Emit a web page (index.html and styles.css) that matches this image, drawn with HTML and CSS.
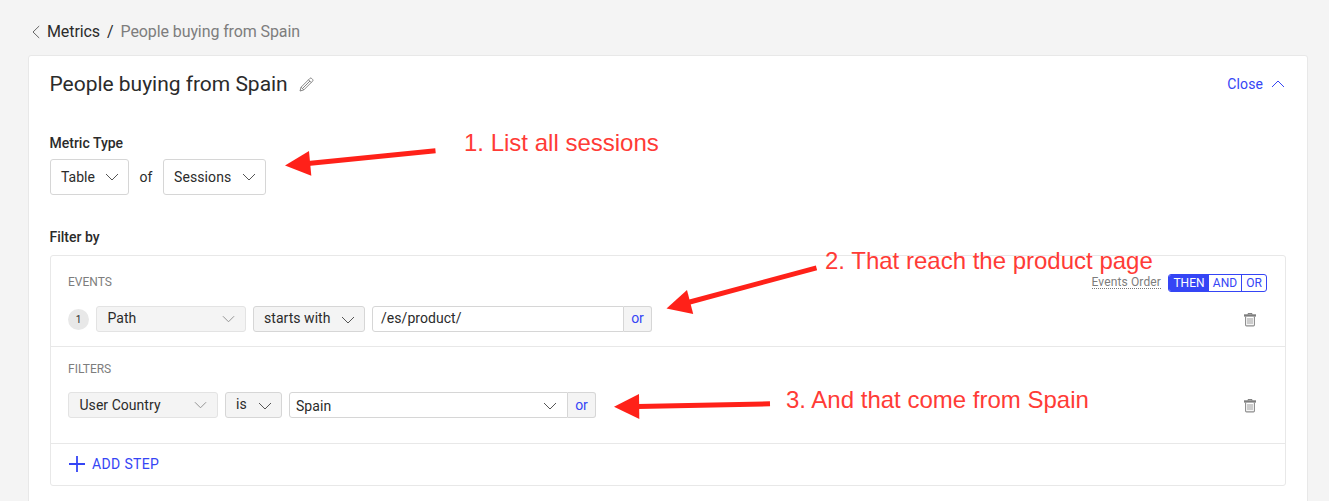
FILE: index.html
```html
<!DOCTYPE html>
<html lang="en">
<head>
<meta charset="utf-8">
<title>Metrics</title>
<link rel="stylesheet" href="styles.css">
</head>
<body>
<svg class="defs" width="0" height="0">
  <symbol id="chev" viewBox="0 0 14 8"><path d="M1 1 L7 7 L13 1" fill="none" stroke="currentColor" stroke-width="1"/></symbol>
  <symbol id="trash" viewBox="0 0 12 14"><path d="M4 1.6 V.6 H8 V1.6" fill="none" stroke="#777"/><path d="M0 1.3 H12 V3.6 H0Z" fill="#7d7d7d"/><path d="M1.6 3.6 V12 Q1.6 12.9 2.5 12.9 H9.5 Q10.4 12.9 10.4 12 V3.6" fill="none" stroke="#8c8c8c" stroke-width="1.1"/><path d="M4 5 V11.2 M6 5 V11.2 M8 5 V11.2" stroke="#999" stroke-width="1"/></symbol>
</svg>
<div class="page">
  <nav class="crumbs">
    <svg class="back" viewBox="0 0 8 14"><path d="M7.2 1 L1 7 L7.2 13" fill="none" stroke="#666"/></svg>
    <span class="crumb-link">Metrics</span><span class="crumb-sep">/</span><span class="crumb-current">People buying from Spain</span>
  </nav>
  <main class="card">
    <header class="head">
      <h1 class="title">People buying from Spain</h1>
      <svg class="pencil" viewBox="0 0 15 15"><path d="M1 14 L2.1 10.2 L10.9 1.4 Q11.7 .6 12.6 1.4 L13.6 2.4 Q14.4 3.3 13.6 4.1 L4.8 12.9 Z M2.1 10.2 L4.8 12.9 M9.5 2.8 L12.2 5.5 M3.6 11.4 L11 4" fill="none" stroke="#777" stroke-width=".9"/></svg>
      <div class="close"><span>Close</span><svg class="chev up"><use href="#chev"/></svg></div>
    </header>
    <div class="label">Metric Type</div>
    <div class="type-row">
      <div class="big-select table"><span>Table</span><svg class="chev"><use href="#chev"/></svg></div>
      <span class="of">of</span>
      <div class="big-select sessions"><span>Sessions</span><svg class="chev"><use href="#chev"/></svg></div>
    </div>
    <div class="label filter-label">Filter by</div>
    <section class="panel">
      <div class="events">
        <div class="section-head">
          <span class="section-name">EVENTS</span>
          <div class="order">
            <span class="order-label">Events Order</span>
            <div class="toggle"><span class="opt then">THEN</span><span class="opt and">AND</span><span class="opt or">OR</span></div>
          </div>
        </div>
        <div class="row">
          <span class="badge">1</span>
          <div class="select field"><span>Path</span><svg class="chev small"><use href="#chev"/></svg></div>
          <div class="select starts"><span>starts with</span><svg class="chev low"><use href="#chev"/></svg></div>
          <div class="value path-value"><span>/es/product/</span></div>
          <div class="or-btn">or</div>
          <svg class="trash"><use href="#trash"/></svg>
        </div>
      </div>
      <div class="filters">
        <span class="section-name">FILTERS</span>
        <div class="row">
          <div class="select field"><span>User Country</span><svg class="chev small"><use href="#chev"/></svg></div>
          <div class="select is"><span>is</span><svg class="chev low"><use href="#chev"/></svg></div>
          <div class="value country"><span>Spain</span><svg class="chev"><use href="#chev"/></svg></div>
          <div class="or-btn">or</div>
          <svg class="trash"><use href="#trash"/></svg>
        </div>
      </div>
      <div class="add"><svg class="plus" viewBox="0 0 16 16"><path d="M8 0 V16 M0 8 H16" stroke="#3545f5" stroke-width="1.8"/></svg><span>ADD STEP</span></div>
    </section>
  </main>
  <svg class="arrows" viewBox="0 0 1329 501">
    <g stroke="#ff2119" stroke-width="5"><path d="M435.5 150.8 L308 163.4"/><path d="M816.5 267.8 L688 302.5"/><path d="M770 403.8 L638 406.4"/></g>
    <g fill="#ff2119"><path d="M285 165.5 L309 151 L311.3 175.8Z"/><path d="M666.5 308.5 L687 290 L693.2 314Z"/><path d="M614 406.8 L639 394 L639.3 419Z"/></g>
  </svg>
  <span class="note note1">1. List all sessions</span>
  <span class="note note2">2. That reach the product page</span>
  <span class="note note3">3. And that come from Spain</span>
</div>
</body>
</html>
```

FILE: styles.css
```css
* { box-sizing: border-box; }
body { margin: 0; background: #f4f4f4; font-family: Roboto, "Liberation Sans", sans-serif; font-size: 14px; color: #2b2b2b; }
.defs { display: block; height: 0; }
.page { position: relative; height: 501px; overflow: hidden; padding: 0 21px 0 28px; display: flex; flex-direction: column; }
.crumbs { height: 55px; flex: none; display: flex; align-items: center; padding: 9px 0 0 4px; font-size: 16px; line-height: 20px; }
.back { width: 8px; height: 14px; margin-right: 7px; }
.crumb-link { letter-spacing: -.1px; }
.crumb-sep { margin: 0 7px 0 7px; }
.crumb-current { color: #7d7d7d; letter-spacing: -.1px; }
.card { flex: none; height: 480px; background: #fff; border: 1px solid #e8e8e8; border-radius: 3px; padding: 0 21px; }
.head { height: 56px; display: flex; align-items: center; }
.title { margin: 0 0 0 -.5px; font-size: 21px; line-height: 28px; font-weight: 400; letter-spacing: -.02px; }
.pencil { width: 15px; height: 15px; margin-left: 11px; }
.close { margin-left: auto; margin-right: 1px; display: flex; align-items: center; gap: 8px; color: #3545f5; letter-spacing: .1px; }
.chev { width: 14px; height: 8px; flex: none; color: #555; }
.chev.up { transform: rotate(180deg); color: #3545f5; }
.chev.small { color: #8c8c8c; width: 13px; }
.chev.low { margin-top: 2px; }
.label { font-weight: 500; line-height: 16px; margin-top: 23px; margin-left: -.5px; }
.type-row { display: flex; align-items: center; height: 36px; margin-top: 8px; }
.big-select { height: 36px; border: 1px solid #d6d6d6; border-radius: 3px; display: flex; align-items: center; justify-content: space-between; padding: 0 9px 0 10px; }
.table { width: 79px; }
.sessions { width: 103px; letter-spacing: .1px; }
.of { width: 34px; text-align: center; }
.filter-label { margin-top: 34px; }
.panel { margin-top: 10px; height: 231px; border: 1px solid #e8e8e8; border-radius: 3px; }
.events { height: 91px; border-bottom: 1px solid #e8e8e8; padding: 18px 18px 0 17px; }
.section-head { display: flex; justify-content: space-between; height: 18px; }
.section-name { font-size: 12px; line-height: 16px; color: #7d7d7d; display: block; }
.order { display: flex; align-items: flex-start; }
.order-label { font-size: 12px; line-height: 14px; height: 14px; color: #7d7d7d; border-bottom: 1px dotted #777; margin: 1px 7px 0 0; letter-spacing: .13px; }
.toggle { display: flex; width: 99px; height: 18px; border: 1px solid #3545f5; border-radius: 3px; overflow: hidden; font-size: 12px; line-height: 17px; color: #3545f5; text-align: center; }
.then { width: 40px; background: #3545f5; color: #fff; }
.and { width: 33px; border-right: 1px solid #3545f5; }
.opt.or { flex: 1; }
.row { display: flex; align-items: center; height: 26px; }
.events .row { margin-top: 14px; }
.badge { width: 21px; height: 21px; margin-right: 7px; border-radius: 50%; background: #e8e8e8; font-size: 10px; line-height: 21px; text-align: center; }
.select { height: 26px; background: #f4f4f4; border: 1px solid #d6d6d6; border-radius: 3px; display: flex; align-items: center; justify-content: space-between; padding: 0 9px 0 10px; margin-right: 7px; line-height: 23px; letter-spacing: .04px; }
.select span { margin-top: -1px; }
.field { width: 150px; border-color: #e3e3e3; padding: 0 10px 0 10.5px; }
.filters .field span { margin-top: 1px; }
.starts { width: 112px; }
.is { width: 57px; }
.value { height: 26px; border: 1px solid #d6d6d6; border-radius: 3px 0 0 3px; display: flex; align-items: center; justify-content: space-between; background: #fff; letter-spacing: .05px; }
.path-value { width: 252px; padding: 0 8px; }
.path-value span { margin-top: -2px; }
.country { width: 279px; padding: 2px 10px 0 6px; }
.or-btn { width: 28px; height: 26px; border: 1px solid #d6d6d6; border-left: 0; border-radius: 0 3px 3px 0; background: #f4f4f4; color: #3545f5; text-align: center; line-height: 23px; }
.filters .or-btn { line-height: 25px; }
.trash { width: 12px; height: 14px; margin: 1px 11px 0 auto; }
.filters { height: 97px; border-bottom: 1px solid #e8e8e8; padding: 14px 18px 0 17px; }
.filters .row { margin-top: 15px; }
.add { height: 40px; display: flex; align-items: center; padding-left: 18px; gap: 7px; color: #3545f5; letter-spacing: .35px; }
.plus { width: 16px; height: 16px; }
.arrows { position: absolute; left: 0; top: 0; width: 1329px; height: 501px; }
.note { position: absolute; font-family: "Liberation Sans", Arial, sans-serif; font-size: 24px; line-height: 28px; color: #ff3b36; white-space: nowrap; }
.note1 { left: 464px; top: 129px; }
.note2 { left: 825px; top: 247px; }
.note3 { left: 786px; top: 386px; }
```
